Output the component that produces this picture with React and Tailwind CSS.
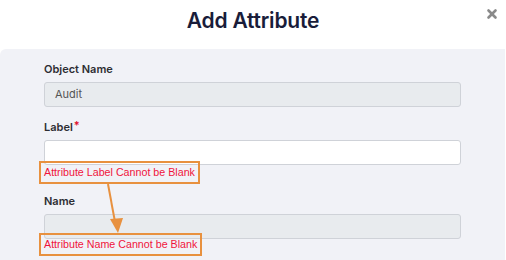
import { X } from "lucide-react";

const Field = ({ label, required, value, disabled, className = "" }) => (
  <div className={className}>
    <div className="h-4 mb-[5px] flex items-center text-[11px] font-semibold text-[#2d2d33]">
      {label}
      {required && <span className="text-[#e0102c] ml-[1px] -mt-1">*</span>}
    </div>
    <div
      className={`h-[25px] w-full rounded-[3px] border border-[#cfd2d8] flex items-center px-[10px] text-[11px] text-[#555] ${
        disabled ? "bg-[#e8ebee]" : "bg-white"
      }`}
    >
      {value}
    </div>
  </div>
);

const Callout = ({ text, className = "" }) => (
  <div
    className={`absolute h-[23px] border-2 border-[#e8913f] flex items-center pl-[3px] whitespace-nowrap text-[10.7px] text-[#f0143c] ${className}`}
    style={{ fontFamily: "'Liberation Sans', Arial, sans-serif" }}
  >
    {text}
  </div>
);

export default function App() {
  return (
    <div
      className="relative w-[506px] h-[260px] bg-white overflow-hidden"
      style={{ fontFamily: "Inter, 'Noto Sans', sans-serif" }}
    >
      {/* Header */}
      <div className="relative h-[49px] flex items-center justify-center">
        <h1 className="text-[21px] font-semibold text-[#191d3a] tracking-[-0.2px] -mt-[8px]">
          Add Attribute
        </h1>
        <button className="absolute right-[7px] top-[7px] text-[#8a8a8a]">
          <X className="w-[14px] h-[14px]" strokeWidth={4.5} />
        </button>
      </div>

      {/* Body */}
      <div className="h-[211px] bg-[#f1f2f7] rounded-tl-md mr-[1px] pl-[44px] pr-[44px] pt-3">
        <Field label="Object Name" value="Audit" disabled />
        <Field label="Label" required className="mt-3" />
        <Field label="Name" disabled className="mt-[28px]" />
      </div>

      {/* Annotations */}
      <Callout text="Attribute Label Cannot be Blank" className="left-[39px] top-[161px] w-[161px]" />
      <svg className="absolute left-0 top-0" width="506" height="260">
        <line x1="108" y1="184" x2="115" y2="222" stroke="#e8913f" strokeWidth="2" />
        <polygon points="110,219 123,218 118,233" fill="#e8913f" />
      </svg>
      <Callout text="Attribute Name Cannot be Blank" className="left-[39px] top-[233px] w-[163px]" />
    </div>
  );
}
